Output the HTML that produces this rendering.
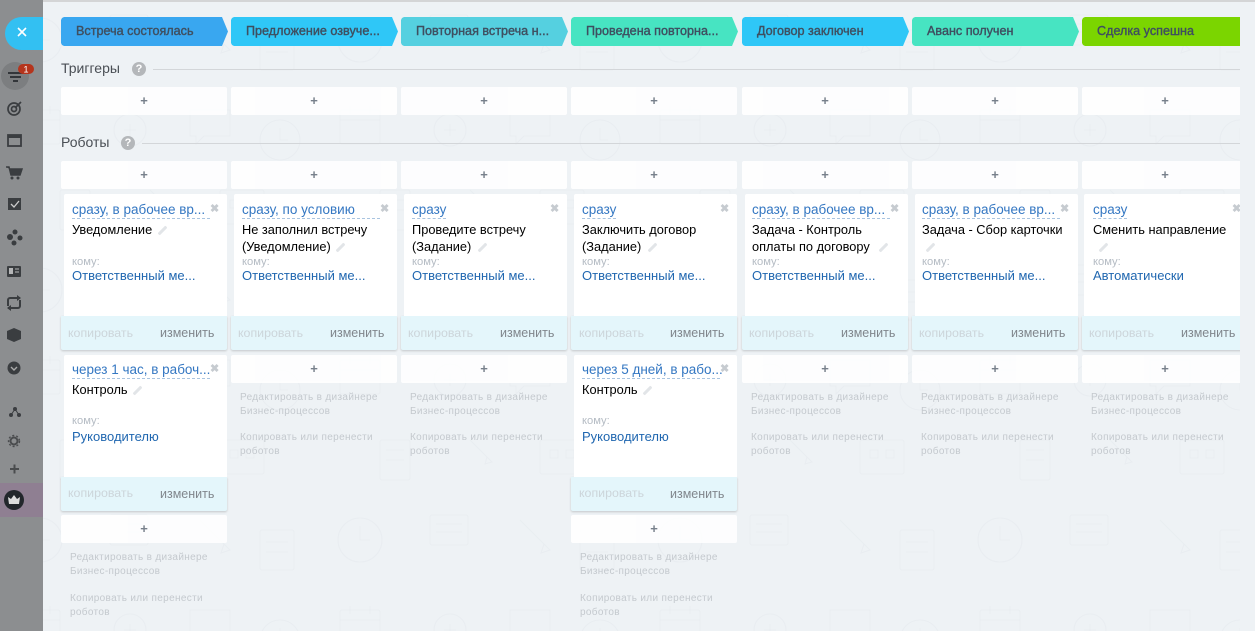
<!DOCTYPE html>
<html><head><meta charset="utf-8">
<style>
html,body{margin:0;padding:0;width:1255px;height:631px;overflow:hidden;background:#eef2f5;font-family:"Liberation Sans",sans-serif}
#root{position:relative;width:1255px;height:631px;overflow:hidden;background:#eef2f5}
#root div,#root span{position:absolute;white-space:nowrap}
.st{top:17px;height:29px;line-height:29px;font-size:12.6px;color:#3f4f60;-webkit-text-stroke:.4px #3f4f60;padding-left:15px;box-sizing:border-box;width:167px;clip-path:polygon(0 3px,1px 1px,3px 0,161px 0,167px 14.5px,161px 29px,3px 29px,1px 28px,0 26px)}
.pl{height:28px;width:166px;background:#fff;opacity:.9;border-radius:2px;text-align:center;font-size:13px;line-height:28px;color:#6b7480;font-weight:bold}
.ft{width:166px;background:#e4f6fb;border-radius:0 0 2px 2px;box-shadow:0 1px 2px rgba(0,0,0,.18);height:34px}
.wh{width:163px;background:#fff;border-radius:2px 2px 0 0}
.d{font-size:13.5px;color:#3477c2;border-bottom:1px dashed #a9c4e0;height:15px;line-height:14px;width:138px;overflow:visible}
.x{font-size:11px;font-weight:bold;color:#c6cbd0;line-height:12px}
.t{font-size:12.8px;color:#000;line-height:17px}
.k{font-size:11.2px;color:#b5bcc4;line-height:12px}
.l{font-size:13px;color:#2067b0;line-height:16px}
.c{font-size:12.4px;color:#ccd5da;line-height:16px}
.i{font-size:12.5px;color:#80868c;line-height:16px}
.g{font-size:10px;color:#c4c9ce;line-height:14px;letter-spacing:.34px}
.p{width:11px;height:3px;background:#e2e5e8;transform:rotate(-45deg);border-radius:1px}
.h{font-size:14px;color:#4a4f55;line-height:18px}
.q{width:14px;height:14px;border-radius:50%;background:#b4b7ba;color:#fff;font-size:11px;font-weight:bold;text-align:center;line-height:14px}
.r{height:1px;background:#d3d6d9}
</style></head>
<body><div id="root">
<svg style="position:absolute;left:0;top:0" width="1255" height="631"><defs><pattern id="bg" width="320" height="250" patternUnits="userSpaceOnUse"><g fill="none" stroke="#e9edf1" stroke-width="1.1"><circle cx="40" cy="40" r="22"/><path d="M40 26v14h10"/><rect x="110" y="15" width="38" height="30" rx="2"/><path d="M116 24h26M116 32h26"/><path d="M200 20l30 30-9 3 3-9z"/><rect x="260" y="30" width="34" height="40" rx="2"/><path d="M266 42h22M266 52h22"/><rect x="20" y="110" width="40" height="34" rx="2"/><path d="M20 120h40M30 106v8M50 106v8"/><circle cx="130" cy="130" r="16"/><path d="M124 130h12M130 124v12"/><path d="M190 110h40v26h-26l-8 8v-8h-6z"/><circle cx="280" cy="140" r="20"/><path d="M280 128v12h8"/><rect x="60" y="190" width="30" height="40" rx="2"/><path d="M66 200h18M66 210h18"/><path d="M150 190l22 22-7 2 2-7z"/><rect x="220" y="190" width="44" height="34" rx="2"/><path d="M230 200h8v8h-8zM246 200h8v8h-8z"/></g></pattern></defs><rect width="1255" height="631" fill="url(#bg)"/></svg>
<div style="left:0;top:0;width:1255px;height:2px;background:#d4d5d6"></div>

<div class="st" style="left:61px;background:#39a7f0">Встреча состоялась</div>
<div class="st" style="left:231px;background:#2fc7f7">Предложение озвуче...</div>
<div class="st" style="left:401px;background:#55d0e0">Повторная встреча н...</div>
<div class="st" style="left:571px;background:#47e4c2">Проведена повторна...</div>
<div class="st" style="left:742px;background:#2fc7f7">Договор заключен</div>
<div class="st" style="left:912px;background:#47e4c2">Аванс получен</div>
<div class="st" style="left:1082px;width:158px;background:#7bd500;clip-path:polygon(0 3px,1px 1px,3px 0,158px 0,158px 29px,3px 29px,1px 28px,0 26px)">Сделка успешна</div>

<div class="h" style="left:61px;top:59px">Триггеры</div><div class="q" style="left:132px;top:62px">?</div><div class="r" style="left:153px;top:69px;width:1087px"></div>
<div class="pl" style="left:61px;top:87px">+</div><div class="pl" style="left:231px;top:87px">+</div><div class="pl" style="left:401px;top:87px">+</div><div class="pl" style="left:571px;top:87px">+</div><div class="pl" style="left:742px;top:87px">+</div><div class="pl" style="left:912px;top:87px">+</div><div class="pl" style="left:1082px;top:87px">+</div>

<div class="h" style="left:61px;top:133px">Роботы</div><div class="q" style="left:121px;top:136px">?</div><div class="r" style="left:142px;top:143px;width:1098px"></div>
<div class="pl" style="left:61px;top:161px">+</div><div class="pl" style="left:231px;top:161px">+</div><div class="pl" style="left:401px;top:161px">+</div><div class="pl" style="left:571px;top:161px">+</div><div class="pl" style="left:742px;top:161px">+</div><div class="pl" style="left:912px;top:161px">+</div><div class="pl" style="left:1082px;top:161px">+</div>

<!-- row 1 cards -->
<div class="ft" style="left:61px;top:316px"></div><div class="wh" style="left:64px;top:194px;height:122px"></div>
<div class="d" style="left:72px;top:203px">сразу, в рабочее вр...</div><div class="x" style="left:210px;top:203px">✖</div>
<div class="t" style="left:72px;top:221px">Уведомление</div><div class="p" style="left:157px;top:229px"></div>
<div class="k" style="left:72px;top:256px">кому:</div><div class="l" style="left:72px;top:268px">Ответственный ме...</div>
<div class="c" style="left:68px;top:325px">копировать</div><div class="i" style="left:160px;top:325px">изменить</div>

<div class="ft" style="left:231px;top:316px"></div><div class="wh" style="left:234px;top:194px;height:122px"></div>
<div class="d" style="left:242px;top:203px">сразу, по условию</div><div class="x" style="left:380px;top:203px">✖</div>
<div class="t" style="left:242px;top:221px">Не заполнил встречу<br>(Уведомление)</div><div class="p" style="left:335px;top:246px"></div>
<div class="k" style="left:242px;top:256px">кому:</div><div class="l" style="left:242px;top:268px">Ответственный ме...</div>
<div class="c" style="left:238px;top:325px">копировать</div><div class="i" style="left:330px;top:325px">изменить</div>

<div class="ft" style="left:401px;top:316px"></div><div class="wh" style="left:404px;top:194px;height:122px"></div>
<div class="d" style="left:412px;top:203px;width:34px">сразу</div><div class="x" style="left:550px;top:203px">✖</div>
<div class="t" style="left:412px;top:221px">Проведите встречу<br>(Задание)</div><div class="p" style="left:477px;top:246px"></div>
<div class="k" style="left:412px;top:256px">кому:</div><div class="l" style="left:412px;top:268px">Ответственный ме...</div>
<div class="c" style="left:408px;top:325px">копировать</div><div class="i" style="left:500px;top:325px">изменить</div>

<div class="ft" style="left:571px;top:316px"></div><div class="wh" style="left:574px;top:194px;height:122px"></div>
<div class="d" style="left:582px;top:203px;width:34px">сразу</div><div class="x" style="left:720px;top:203px">✖</div>
<div class="t" style="left:582px;top:221px">Заключить договор<br>(Задание)</div><div class="p" style="left:647px;top:246px"></div>
<div class="k" style="left:582px;top:256px">кому:</div><div class="l" style="left:582px;top:268px">Ответственный ме...</div>
<div class="c" style="left:579px;top:325px">копировать</div><div class="i" style="left:670px;top:325px">изменить</div>

<div class="ft" style="left:742px;top:316px"></div><div class="wh" style="left:745px;top:194px;height:122px"></div>
<div class="d" style="left:752px;top:203px">сразу, в рабочее вр...</div><div class="x" style="left:890px;top:203px">✖</div>
<div class="t" style="left:752px;top:221px">Задача - Контроль<br>оплаты по договору</div><div class="p" style="left:878px;top:246px"></div>
<div class="k" style="left:752px;top:256px">кому:</div><div class="l" style="left:752px;top:268px">Ответственный ме...</div>
<div class="c" style="left:749px;top:325px">копировать</div><div class="i" style="left:841px;top:325px">изменить</div>

<div class="ft" style="left:912px;top:316px"></div><div class="wh" style="left:915px;top:194px;height:122px"></div>
<div class="d" style="left:922px;top:203px">сразу, в рабочее вр...</div><div class="x" style="left:1060px;top:203px">✖</div>
<div class="t" style="left:922px;top:221px">Задача - Сбор карточки</div><div class="p" style="left:925px;top:246px"></div>
<div class="k" style="left:922px;top:256px">кому:</div><div class="l" style="left:922px;top:268px">Ответственный ме...</div>
<div class="c" style="left:919px;top:325px">копировать</div><div class="i" style="left:1011px;top:325px">изменить</div>

<div class="ft" style="left:1082px;top:316px"></div><div class="wh" style="left:1084px;top:194px;height:122px;width:164px"></div>
<div class="d" style="left:1093px;top:203px;width:34px">сразу</div><div class="x" style="left:1232px;top:203px">✖</div>
<div class="t" style="left:1093px;top:221px">Сменить направление</div><div class="p" style="left:1098px;top:246px"></div>
<div class="k" style="left:1093px;top:256px">кому:</div><div class="l" style="left:1093px;top:268px">Автоматически</div>
<div class="c" style="left:1089px;top:325px">копировать</div><div class="i" style="left:1181px;top:325px">изменить</div>

<!-- row 2 cards -->
<div class="ft" style="left:61px;top:477px"></div><div class="wh" style="left:64px;top:355px;height:122px"></div>
<div class="d" style="left:72px;top:363px">через 1 час, в рабоч...</div><div class="x" style="left:210px;top:363px">✖</div>
<div class="t" style="left:72px;top:381px">Контроль</div><div class="p" style="left:132px;top:389px"></div>
<div class="k" style="left:72px;top:415px">кому:</div><div class="l" style="left:72px;top:429px">Руководителю</div>
<div class="c" style="left:68px;top:485px">копировать</div><div class="i" style="left:160px;top:486px">изменить</div>

<div class="ft" style="left:571px;top:477px"></div><div class="wh" style="left:574px;top:355px;height:122px"></div>
<div class="d" style="left:582px;top:363px">через 5 дней, в рабо...</div><div class="x" style="left:720px;top:363px">✖</div>
<div class="t" style="left:582px;top:381px">Контроль</div><div class="p" style="left:642px;top:389px"></div>
<div class="k" style="left:582px;top:415px">кому:</div><div class="l" style="left:582px;top:429px">Руководителю</div>
<div class="c" style="left:579px;top:485px">копировать</div><div class="i" style="left:670px;top:486px">изменить</div>

<!-- add buttons row 2 -->
<div class="pl" style="left:231px;top:355px">+</div><div class="g" style="left:240px;top:391px">Редактировать в дизайнере<br>Бизнес-процессов</div><div class="g" style="left:240px;top:431px">Копировать или перенести<br>роботов</div>
<div class="pl" style="left:401px;top:355px">+</div><div class="g" style="left:410px;top:391px">Редактировать в дизайнере<br>Бизнес-процессов</div><div class="g" style="left:410px;top:431px">Копировать или перенести<br>роботов</div>
<div class="pl" style="left:742px;top:355px">+</div><div class="g" style="left:751px;top:391px">Редактировать в дизайнере<br>Бизнес-процессов</div><div class="g" style="left:751px;top:431px">Копировать или перенести<br>роботов</div>
<div class="pl" style="left:912px;top:355px">+</div><div class="g" style="left:921px;top:391px">Редактировать в дизайнере<br>Бизнес-процессов</div><div class="g" style="left:921px;top:431px">Копировать или перенести<br>роботов</div>
<div class="pl" style="left:1082px;top:355px">+</div><div class="g" style="left:1091px;top:391px">Редактировать в дизайнере<br>Бизнес-процессов</div><div class="g" style="left:1091px;top:431px">Копировать или перенести<br>роботов</div>

<div class="pl" style="left:61px;top:515px">+</div><div class="g" style="left:70px;top:551px">Редактировать в дизайнере<br>Бизнес-процессов</div><div class="g" style="left:70px;top:592px">Копировать или перенести<br>роботов</div>
<div class="pl" style="left:571px;top:515px">+</div><div class="g" style="left:580px;top:551px">Редактировать в дизайнере<br>Бизнес-процессов</div><div class="g" style="left:580px;top:592px">Копировать или перенести<br>роботов</div>

<!-- right clip strip -->
<div style="left:1240px;top:2px;width:15px;height:629px;background:#eef2f5"></div>

<!-- sidebar -->
<div style="left:0;top:0;width:43px;height:631px;background:#8c8e90"></div>
<div style="left:0;top:483px;width:43px;height:34px;background:#8f7f92"></div>
<div style="left:5px;top:17px;width:38px;height:33px;background:#33c0f2;border-radius:17px 0 0 17px"></div>
<svg style="position:absolute;left:0;top:0" width="43" height="520">
<path d="M18 28l8 8M26 28l-8 8" stroke="#fff" stroke-width="1.6" fill="none"/>
<circle cx="15" cy="76" r="14" fill="#7c7e80"/>
<path d="M8 73h15M10 77h11M13 81h5" stroke="#33363a" stroke-width="2" fill="none"/>
<rect x="18" y="64" width="16" height="10" rx="5" fill="#b5341c"/>
<text x="26" y="72.500" font-size="9" fill="#fff" text-anchor="middle" font-family="Liberation Sans">1</text>
<g fill="none" stroke="#3a3d40" stroke-width="1.7"><circle cx="14" cy="109" r="6"/><circle cx="14" cy="109" r="2.500"/><path d="M15 108l6-6"/></g>
<rect x="8" y="135" width="13" height="11" fill="none" stroke="#3a3d40" stroke-width="1.800"/><path d="M8 136.500h13" stroke="#3a3d40" stroke-width="3"/>
<path d="M6 167h3l2 8h9l2-6H10" fill="#3a3d40" stroke="#3a3d40" stroke-width="1.500"/><circle cx="12" cy="178" r="1.500" fill="#3a3d40"/><circle cx="18" cy="178" r="1.500" fill="#3a3d40"/>
<rect x="8" y="198" width="13" height="12" fill="#3a3d40"/><path d="M11 204l3 3 5-6" stroke="#ccc" stroke-width="1.300" fill="none"/>
<circle cx="15" cy="232" r="2.500" fill="#3a3d40"/><circle cx="20" cy="238" r="2.500" fill="#3a3d40"/><circle cx="14" cy="243" r="2.500" fill="#3a3d40"/><circle cx="10" cy="237" r="3" fill="#3a3d40"/>
<rect x="7" y="266" width="14" height="11" rx="1" fill="#3a3d40"/><rect x="9" y="268" width="4" height="6" fill="#b5b6b7"/><path d="M15 269h4M15 272h4" stroke="#b5b6b7"/>
<path d="M8 306v-6a2 2 0 0 1 2-2h10M20 300v6a2 2 0 0 1-2 2H8" stroke="#3a3d40" stroke-width="2" fill="none"/><path d="M17 295l4 3-4 3zM11 305l-4 3 4 3z" fill="#3a3d40"/>
<path d="M14 328l7 3v8l-7 3-7-3v-8z" fill="#3a3d40"/>
<circle cx="14" cy="368" r="6.500" fill="#3a3d40"/><path d="M11 367l3 3 3-3" stroke="#aaa" stroke-width="1.400" fill="none"/>
<circle cx="15" cy="409" r="2" fill="#3a3d40"/><circle cx="11" cy="415" r="2" fill="#3a3d40"/><circle cx="19" cy="415" r="2" fill="#3a3d40"/><path d="M15 409l-4 6M15 409l4 6" stroke="#3a3d40"/>
<circle cx="14" cy="441" r="3.500" fill="none" stroke="#4a4c4e" stroke-width="2"/><circle cx="14" cy="441" r="5.500" fill="none" stroke="#4a4c4e" stroke-width="1.400" stroke-dasharray="2 2"/>
<path d="M10 469h9M14.500 464.500v9" stroke="#4a4c4e" stroke-width="2"/>
<circle cx="14" cy="500" r="10" fill="#23272c"/><path d="M8 497l3 2 3-4 3 4 3-2-1 7H9z" fill="#ddd"/>
</svg>
</div></body></html>
